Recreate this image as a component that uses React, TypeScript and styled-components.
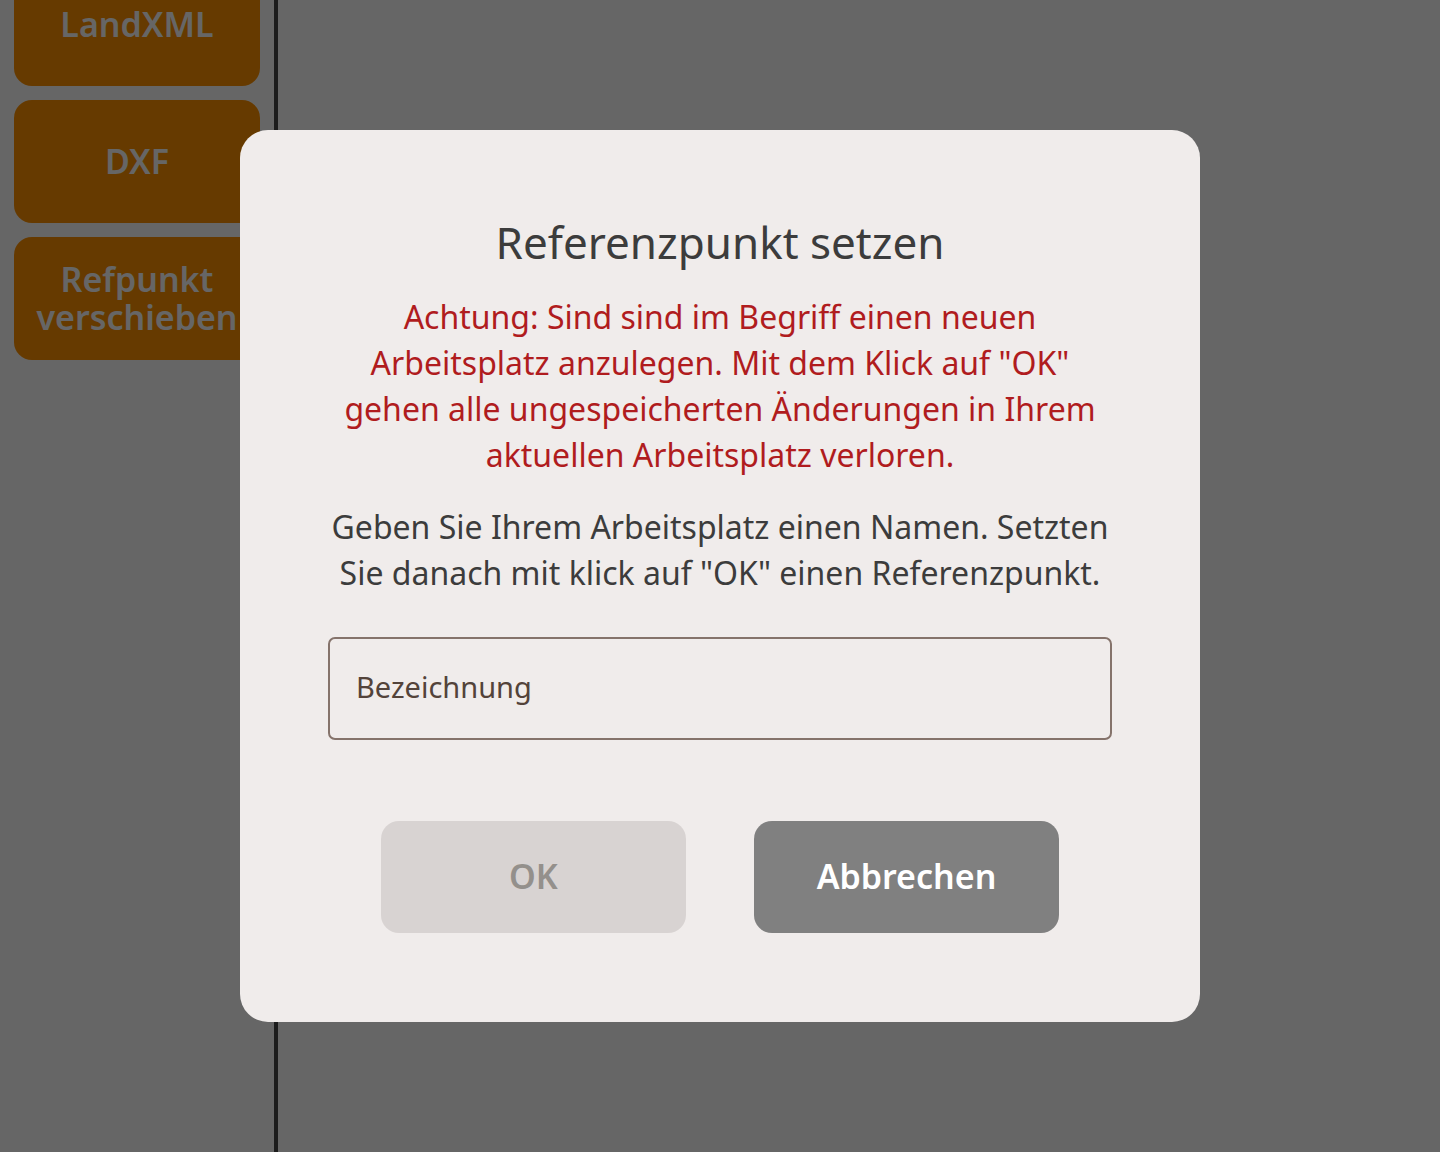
import React, { useState } from "react";
import styled, { createGlobalStyle } from "styled-components";

const GlobalStyle = createGlobalStyle`
  *, *::before, *::after { box-sizing: border-box; }
  body {
    margin: 0;
    background: #ffffff;
    color: #3c3c3c;
    font-family: "Noto Sans", "Open Sans", sans-serif;
  }
`;

const Page = styled.div`
  display: flex;
  height: 100vh;
  overflow: hidden;
`;

const Sidebar = styled.nav`
  flex: none;
  width: 278px;
  padding: 0 14px;
  border-right: 4px solid #484848;
  overflow: hidden;
`;

const ActionList = styled.div`
  display: flex;
  flex-direction: column;
  gap: 14px;
  margin-top: -37px;
`;

const Button = styled.button`
  border: 0;
  border-radius: 18px;
  padding: 0 0 2px;
  font-family: inherit;
  font-size: 34px;
  line-height: 38px;
  font-weight: 600;
  color: #ffffff;
  cursor: pointer;
`;

const ActionButton = styled(Button)`
  height: 123px;
  background: #ff9100;
`;

const Workspace = styled.main`
  flex: 1;
`;

const Backdrop = styled.div`
  position: fixed;
  inset: 0;
  display: flex;
  align-items: center;
  justify-content: center;
  background: rgba(0, 0, 0, 0.6);
`;

const Dialog = styled.form`
  display: flex;
  flex-direction: column;
  width: 100%;
  max-width: 960px;
  padding: 88px 88px 89px;
  border-radius: 28px;
  background: #f0eceb;
  text-align: center;
`;

const Title = styled.h1`
  margin: 0 0 28px;
  font-size: 44px;
  line-height: 48px;
  font-weight: 400;
`;

const Message = styled.p<{ $warning?: boolean }>`
  margin: 0 0 26px;
  font-size: 32px;
  line-height: 46px;
  color: ${(p) => (p.$warning ? "#b01c1e" : "#3c3c3c")};
`;

const Field = styled.div`
  position: relative;
  margin: 15px 0 81px;
`;

const FieldLabel = styled.label<{ $hidden: boolean }>`
  position: absolute;
  inset: 0 auto 0 28px;
  display: flex;
  align-items: center;
  padding-bottom: 4px;
  font-size: 29px;
  color: #53433a;
  pointer-events: none;
  opacity: ${(p) => (p.$hidden ? 0 : 1)};
`;

const FieldInput = styled.input`
  display: block;
  width: 100%;
  height: 103px;
  padding: 0 26px;
  border: 2px solid #85736b;
  border-radius: 7px;
  background: transparent;
  color: #3c3c3c;
  font-family: inherit;
  font-size: 29px;
`;

const Actions = styled.div`
  display: flex;
  justify-content: center;
  gap: 68px;
`;

const DialogButton = styled(Button)`
  width: 305px;
  height: 112px;
  background: #808080;

  &:disabled {
    background: #d8d3d2;
    color: #94908c;
    cursor: default;
  }
`;

const sidebarActions = ["LandXML", "DXF", "Refpunkt verschieben"];

export default function App() {
  const [name, setName] = useState("");

  return (
    <>
      <GlobalStyle />
      <Page>
        <Sidebar>
          <ActionList>
            {sidebarActions.map((label) => (
              <ActionButton key={label} type="button">
                {label}
              </ActionButton>
            ))}
          </ActionList>
        </Sidebar>
        <Workspace />
      </Page>
      <Backdrop>
        <Dialog
          role="dialog"
          aria-modal="true"
          aria-labelledby="dialog-title"
          onSubmit={(e) => e.preventDefault()}
        >
          <Title id="dialog-title">Referenzpunkt setzen</Title>
          <Message $warning>
            Achtung: Sind sind im Begriff einen neuen Arbeitsplatz anzulegen.
            Mit dem Klick auf "OK" gehen alle ungespeicherten Änderungen in
            Ihrem aktuellen Arbeitsplatz verloren.
          </Message>
          <Message>
            Geben Sie Ihrem Arbeitsplatz einen Namen. Setzten Sie danach mit
            klick auf "OK" einen Referenzpunkt.
          </Message>
          <Field>
            <FieldLabel htmlFor="name" $hidden={name !== ""}>
              Bezeichnung
            </FieldLabel>
            <FieldInput
              id="name"
              value={name}
              onChange={(e) => setName(e.target.value)}
            />
          </Field>
          <Actions>
            <DialogButton type="submit" disabled={name === ""}>
              OK
            </DialogButton>
            <DialogButton type="button">Abbrechen</DialogButton>
          </Actions>
        </Dialog>
      </Backdrop>
    </>
  );
}
